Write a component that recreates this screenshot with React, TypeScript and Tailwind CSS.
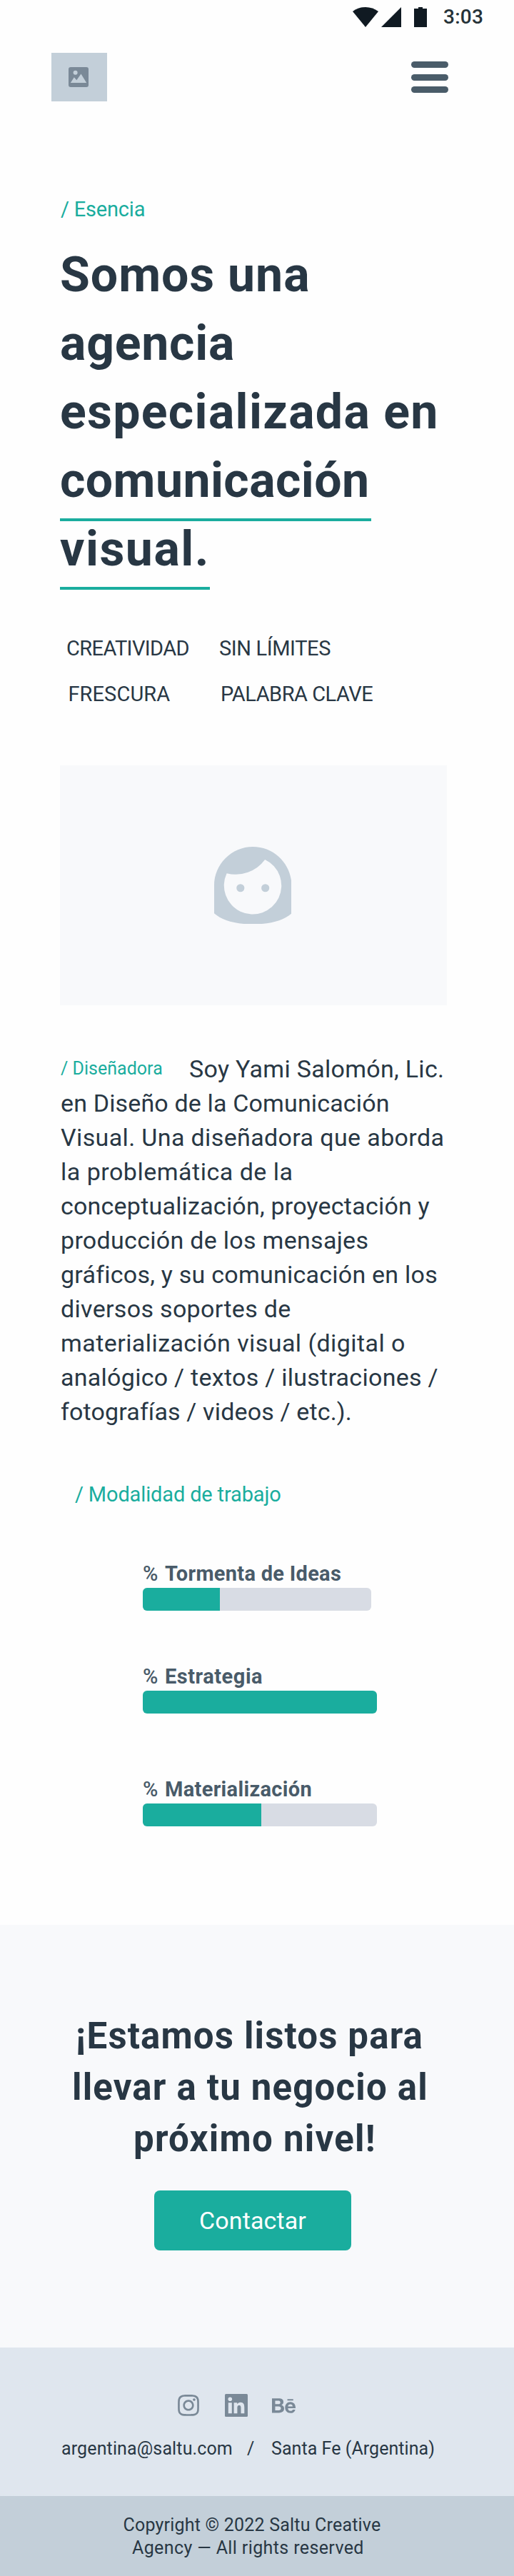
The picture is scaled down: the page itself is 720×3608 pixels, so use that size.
import { FaBehance, FaInstagram } from "react-icons/fa";

function StatusBar() {
  return (
    <div className="flex h-12 items-center pl-[494px]">
      <svg width="104" height="28" viewBox="0 0 104 28" className="shrink-0" fill="#101a22">
        <path d="M0 6 Q8 0 18 0 T36 6 L18 28 Z" />
        <path d="M68 0 V28 H40 Z" />
        <path d="M86 2 H92 V0 H98 V2 H104 V28 H86 Z" />
      </svg>
      <span className="ml-[23px] text-[28px] leading-[48px] font-medium tracking-[0.26px] text-[#263238]">3:03</span>
    </div>
  );
}

function Header() {
  return (
    <header className="flex items-center justify-between pt-[26px] pr-[92px] pl-[72px]">
      <div className="flex h-[68px] w-[78.3px] items-center bg-[#c3cfd9] pl-6">
        <svg width="28" height="28" viewBox="0 0 28 28">
          <rect width="28" height="28" rx="3" fill="#7a8997" />
          <circle cx="9.6" cy="7.8" r="3" fill="#c3cfd9" />
          <path d="M2.8 22 L7.8 14.2 L11.3 18.3 L17.5 9.6 L25.2 22 Z" fill="#c3cfd9" />
        </svg>
      </div>
      <button className="flex flex-col gap-[8.4px]" aria-label="Menú">
        <span className="h-[9px] w-[52px] rounded-full bg-[#4a5c69]" />
        <span className="h-[9px] w-[52px] rounded-full bg-[#4a5c69]" />
        <span className="h-[9px] w-[52px] rounded-full bg-[#4a5c69]" />
      </button>
    </header>
  );
}

function Portrait() {
  return (
    <div className="mx-[84px] mt-[68px] flex h-[336px] w-[542px] items-center justify-center bg-[#f8f9fb]">
      <svg width="108.5" height="108.5" viewBox="0 0 109 109" className="mr-0.5" fill="#c3cfd9">
        <path
          fillRule="evenodd"
          d="M0 54.5 C0 24.5 24.5 0 54.5 0 S109 24.5 109 54.5 V93.8 C98 103.5 80 109 54.5 109 S11 103.5 0 93.8 Z M71.5 18 A40.4 40.4 0 1 1 17.7 37.3 A51.4 51.4 0 0 0 71.5 18 Z"
        />
        <circle cx="37" cy="58" r="5.6" />
        <circle cx="72" cy="58" r="5.6" />
      </svg>
    </div>
  );
}

function Bio() {
  return (
    <div className="mt-[65px] pl-[85px] text-[34px] leading-[48px] whitespace-nowrap">
      <div className="flex">
        <span className="w-[180px] text-[25px] tracking-[0.02px] text-[#1aad9e]">/ Diseñadora</span>
        <span className="tracking-[0.29px]">Soy Yami Salomón, Lic.</span>
      </div>
      <p>
        <span className="block tracking-[0.15px]">en Diseño de la Comunicación</span>
        <span className="block tracking-[0.37px]">Visual. Una diseñadora que aborda</span>
        <span className="block tracking-[0.5px]">la problemática de la</span>
        <span className="block tracking-[0.21px]">conceptualización, proyectación y</span>
        <span className="block tracking-[0.29px]">producción de los mensajes</span>
        <span className="block tracking-[0.24px]">gráficos, y su comunicación en los</span>
        <span className="block tracking-[0.32px]">diversos soportes de</span>
        <span className="block tracking-[0.43px]">materialización visual (digital o</span>
        <span className="block tracking-[0.27px]">analógico / textos / ilustraciones /</span>
        <span className="block tracking-[0.15px]">fotografías / videos / etc.).</span>
      </p>
    </div>
  );
}

const skills = [
  { name: "Tormenta de Ideas", label: "tracking-[0.29px]", track: "mt-[71px] w-[320px]", fill: "w-[108px]" },
  { name: "Estrategia", label: "tracking-[0.52px]", track: "mt-[72px] w-[328px]", fill: "w-[328px]" },
  { name: "Materialización", label: "tracking-[0.32px]", track: "mt-[86px] w-[328px]", fill: "w-[166px]" },
];

function Skills() {
  return (
    <section className="pb-[138px]">
      <h2 className="mt-[72px] pl-[105px] text-[29px] leading-10 tracking-[-0.15px] text-[#1aad9e]">/ Modalidad de trabajo</h2>
      <div className="pl-[200px]">
        {skills.map((s) => (
          <div key={s.name} className={s.track}>
            <div className={"flex text-[29px] leading-10 font-bold whitespace-nowrap text-[#495b69] " + s.label}>
              <span className="w-[31px] font-medium">%</span>
              {s.name}
            </div>
            <div className="h-8 overflow-hidden rounded-md bg-[#d8dce4]">
              <div className={"h-full bg-[#1aad9e] " + s.fill} />
            </div>
          </div>
        ))}
      </div>
    </section>
  );
}

function LinkedIn() {
  return (
    <svg width="32" height="32" viewBox="0 0 32 32" className="shrink-0">
      <rect width="32" height="32" rx="1.5" fill="#7a8997" />
      <g fill="#dfe6ee">
        <circle cx="7.3" cy="7.3" r="2.8" />
        <path d="M4.8 12.2 H9.8 V27.3 H4.8 Z M12.6 12.2 H17.2 V14.3 C18.1 12.7 19.9 11.8 21.8 11.8 C26.3 11.8 27.3 14.7 27.3 19 V27.3 H22.5 V20 C22.5 18 22.4 15.9 20 15.9 C17.6 15.9 17.4 17.9 17.4 19.9 V27.3 H12.6 Z" />
      </g>
    </svg>
  );
}

export default function App() {
  return (
    <div className="h-[3608px] w-[720px] overflow-hidden bg-[#fefefe] font-['Roboto',sans-serif] text-[#283744]">
      <StatusBar />
      <Header />

      <main>
        <div className="mt-[131px] pl-[85px] text-[29px] leading-10 tracking-[-0.2px] text-[#1aad9e]">/ Esencia</div>
        <h1 className="mt-6 pl-[84px] text-[68px] leading-[96px] font-bold whitespace-nowrap">
          <span className="block tracking-[0.95px]">Somos una</span>
          <span className="block tracking-[0.75px]">agencia</span>
          <span className="block tracking-[1.31px]">especializada en</span>
          <span className="block">
            <span className="border-b-4 border-[#1aad9e] pr-[2.5px] pb-[13px] tracking-[0.4px]">comunicación</span>
          </span>
          <span className="block">
            <span className="border-b-4 border-[#1aad9e] pb-[13px] tracking-[1.5px]">visual.</span>
          </span>
        </h1>

        <ul className="mt-[59px] grid grid-cols-[214px_1fr] pl-[93px] text-[29px] leading-[64px] whitespace-nowrap">
          <li className="tracking-[-0.6px]">CREATIVIDAD</li>
          <li className="tracking-[-0.39px]">SIN LÍMITES</li>
          <li className="pl-[2.5px] tracking-[0.08px]">FRESCURA</li>
          <li className="pl-[2px] tracking-[-0.49px]">PALABRA CLAVE</li>
        </ul>

        <Portrait />
        <Bio />
        <Skills />
      </main>

      <section className="h-[592px] bg-[#f8f9fb] pt-[120px]">
        <h2 className="text-[51px] leading-[72px] font-bold whitespace-nowrap">
          <span className="block pl-[106px] tracking-[1.14px]">¡Estamos listos para</span>
          <span className="block pl-[101px] tracking-[1.17px]">llevar a tu negocio al</span>
          <span className="block pl-[187px] tracking-[1.25px]">próximo nivel!</span>
        </h2>
        <button className="mt-9 ml-[216px] flex h-[84px] w-[276px] items-center justify-center rounded-lg bg-[#1aad9e] text-[34px] leading-[48px] tracking-[0.13px] text-white">
          Contactar
        </button>
      </section>

      <footer>
        <div className="h-[208px] bg-[#dfe6ee] pt-[65px]">
          <div className="flex h-8 items-center gap-[34px] pl-[247px] text-[#7a8997]">
            <FaInstagram size={34} className="shrink-0" />
            <LinkedIn />
            <FaBehance size={33} className="shrink-0" />
          </div>
          <div className="mt-[29px] flex pl-[86px] text-[25px] leading-8 whitespace-nowrap">
            <span className="w-[260px] tracking-[0.13px]">argentina@saltu.com</span>
            <span className="w-[34px]">/</span>
            <span className="tracking-[0.06px]">Santa Fe (Argentina)</span>
          </div>
        </div>
        <div className="h-[112px] bg-[#c3cfd9] pt-[25px] text-[25px] leading-8 whitespace-nowrap">
          <span className="block pl-[172.5px] tracking-[0.2px]">Copyright © 2022 Saltu Creative</span>
          <span className="block pl-[185px] tracking-[0.38px]">Agency — All rights reserved</span>
        </div>
      </footer>
    </div>
  );
}
